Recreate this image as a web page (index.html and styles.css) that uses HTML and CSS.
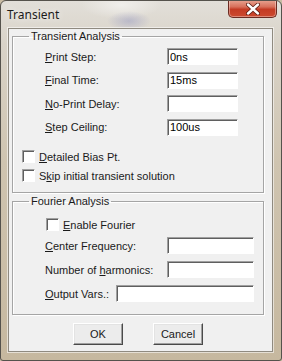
FILE: index.html
```html
<!DOCTYPE html>
<html>
<head>
  <title>Transient</title>
  <meta charset="UTF-8">
  <link rel="stylesheet" href="styles.css">
</head>
<body>
  <div class="window">

    <!-- title bar -->
    <div class="titlebar">
      <span class="title">Transient</span>
      <button class="close" type="button" aria-label="Close">
        <svg width="14" height="12" viewBox="0 0 14 12">
          <path d="M2 1.5 L12 10.5 M12 1.5 L2 10.5" stroke="#5a1a10" stroke-width="4" stroke-linecap="round"/>
          <path d="M2 1.5 L12 10.5 M12 1.5 L2 10.5" stroke="#ffffff" stroke-width="2.4" stroke-linecap="round"/>
        </svg>
      </button>
    </div>

    <div class="client">
      <form id="transientForm">

        <!-- Transient Analysis -->
        <fieldset class="group group-transient">
          <legend>Transient Analysis</legend>
          <div class="rows">
            <div class="row">
              <label class="field-label" for="printStep"><u>P</u>rint Step:</label>
              <input type="text" class="field" id="printStep" value="0ns">
            </div>
            <div class="row">
              <label class="field-label" for="finalTime"><u>F</u>inal Time:</label>
              <input type="text" class="field" id="finalTime" value="15ms">
            </div>
            <div class="row">
              <label class="field-label" for="noPrint"><u>N</u>o-Print Delay:</label>
              <input type="text" class="field" id="noPrint" value="">
            </div>
            <div class="row">
              <label class="field-label" for="stepCeiling"><u>S</u>tep Ceiling:</label>
              <input type="text" class="field" id="stepCeiling" value="100us">
            </div>
          </div>

          <label class="check check-first">
            <input type="checkbox" class="box">
            <span><u>D</u>etailed Bias Pt.</span>
          </label>
          <label class="check">
            <input type="checkbox" class="box">
            <span>S<u>k</u>ip initial transient solution</span>
          </label>
        </fieldset>

        <!-- Fourier Analysis -->
        <fieldset class="group group-fourier">
          <legend>Fourier Analysis</legend>
          <label class="check check-enable">
            <input type="checkbox" class="box">
            <span><u>E</u>nable Fourier</span>
          </label>

          <div class="rows rows-fourier">
            <div class="row">
              <label class="field-label" for="centerFreq"><u>C</u>enter Frequency:</label>
              <input type="text" class="field field-wide" id="centerFreq">
            </div>
            <div class="row">
              <label class="field-label" for="harmonics">Number of <u>h</u>armonics:</label>
              <input type="text" class="field field-wide" id="harmonics">
            </div>
            <div class="row">
              <label class="field-label field-label-short" for="outputVars"><u>O</u>utput Vars.:</label>
              <input type="text" class="field field-long" id="outputVars">
            </div>
          </div>
        </fieldset>

        <div class="buttons">
          <button type="button" class="btn">OK</button>
          <button type="button" class="btn">Cancel</button>
        </div>

      </form>
    </div>
  </div>
</body>
</html>
```

FILE: styles.css
```css
body {
  margin: 0;
  font-family: 'Liberation Sans', Arial, sans-serif;
  font-size: 11px;
  color: #000;
  background: #c9bca4;
}

.window {
  width: 282px;
  height: 361px;
  box-sizing: border-box;
  display: flex;
  flex-direction: column;
  border: 1px solid #55524c;
  border-radius: 6px 6px 3px 3px;
  background:
    radial-gradient(ellipse 22px 10px at 128px 20px, rgba(120, 125, 185, 0.35), transparent),
    radial-gradient(ellipse 40px 14px at 120px 4px, rgba(255, 255, 255, 0.5), transparent),
    linear-gradient(to bottom, #e2dfd9 0, #d9d3c8 12%, #cfc4b0 45%, #c6b89f 100%);
  overflow: hidden;
}

/* title bar */

.titlebar {
  height: 27px;
  display: flex;
  align-items: flex-start;
  justify-content: space-between;
  flex-shrink: 0;
}

.title {
  font-family: 'Noto Sans', 'Open Sans', sans-serif;
  font-size: 12px;
  color: #1b1b1b;
  margin: 5px 0 0 6px;
  text-shadow: 0 0 6px rgba(255, 255, 255, 0.9);
}

.close {
  width: 49px;
  height: 18px;
  margin: -1px 4px 0 0;
  padding: 0;
  border: 1px solid #6b2b22;
  border-top: none;
  border-radius: 0 0 5px 5px;
  background: linear-gradient(to bottom, #e8a593 0, #d8705b 40%, #c43b24 55%, #cc4a2f 100%);
  box-shadow: inset 0 0 0 1px rgba(255, 255, 255, 0.35);
  display: flex;
  align-items: center;
  justify-content: center;
}

/* client area */

.client {
  flex: 1;
  margin: 0 8px 8px 7px;
  background: #f0f0f0;
  border: 1px solid #8f8a80;
  box-shadow: 0 0 0 1px rgba(255, 255, 255, 0.55);
  padding: 1px 0 0 3px;
}

.group {
  width: 252px;
  box-sizing: border-box;
  margin: 0;
  border: 1px solid #a5a5a5;
  box-shadow: inset 1px 1px 0 #fff, 1px 1px 0 #fff;
  padding: 5px 0 10px 9px;
  min-inline-size: 0;
}

.group legend {
  margin-left: 7px;
  padding: 0 2px;
  line-height: 13px;
  color: #1a1a1a;
}

.group-fourier {
  margin-top: 2px;
  padding-top: 10px;
  padding-bottom: 12px;
}

.rows {
  display: flex;
  flex-direction: column;
  gap: 6.5px;
}

.rows-fourier {
  margin-top: 6px;
  gap: 7px;
}

.row {
  display: flex;
  align-items: center;
  height: 17px;
  padding-left: 23px;
}

.field-label {
  width: 122px;
  flex-shrink: 0;
  color: #1a1a1a;
}

.field-label-short {
  width: 71px;
}

.field {
  appearance: none;
  width: 71px;
  height: 17px;
  box-sizing: border-box;
  margin: 0;
  padding: 0 0 0 2px;
  font-family: inherit;
  font-size: 11px;
  color: #000;
  background: #fff;
  border: 1px solid;
  border-color: #a0a0a0 #fff #fff #a0a0a0;
  box-shadow: inset 1px 1px 0 #5f5f5f;
  border-radius: 0;
  outline: none;
}

.field-wide {
  width: 87px;
}

.field-long {
  width: 138px;
}

/* checkboxes */

.check {
  display: flex;
  align-items: center;
  height: 13px;
  margin-top: 6px;
  color: #1a1a1a;
}

.check-first {
  margin-top: 14.5px;
}

.check-enable {
  margin-top: 0;
  padding-left: 24px;
}

.box {
  appearance: none;
  width: 13px;
  height: 13px;
  margin: 0 4px 0 0;
  box-sizing: border-box;
  background: #fff;
  border: 1px solid;
  border-color: #a0a0a0 #fff #fff #a0a0a0;
  box-shadow: inset 1px 1px 0 #5f5f5f;
  border-radius: 0;
}

/* buttons */

.buttons {
  display: flex;
  gap: 30px;
  margin-top: 8px;
  padding-left: 61px;
}

.btn {
  width: 50px;
  height: 22px;
  padding: 0;
  font-family: inherit;
  font-size: 11px;
  color: #1a1a1a;
  background: #ececec;
  border: 1px solid;
  border-color: #fff #4a4a4a #4a4a4a #fff;
  box-shadow: inset -1px -1px 0 #a0a0a0, inset 1px 1px 0 #e3e3e3;
  border-radius: 0;
}
```
